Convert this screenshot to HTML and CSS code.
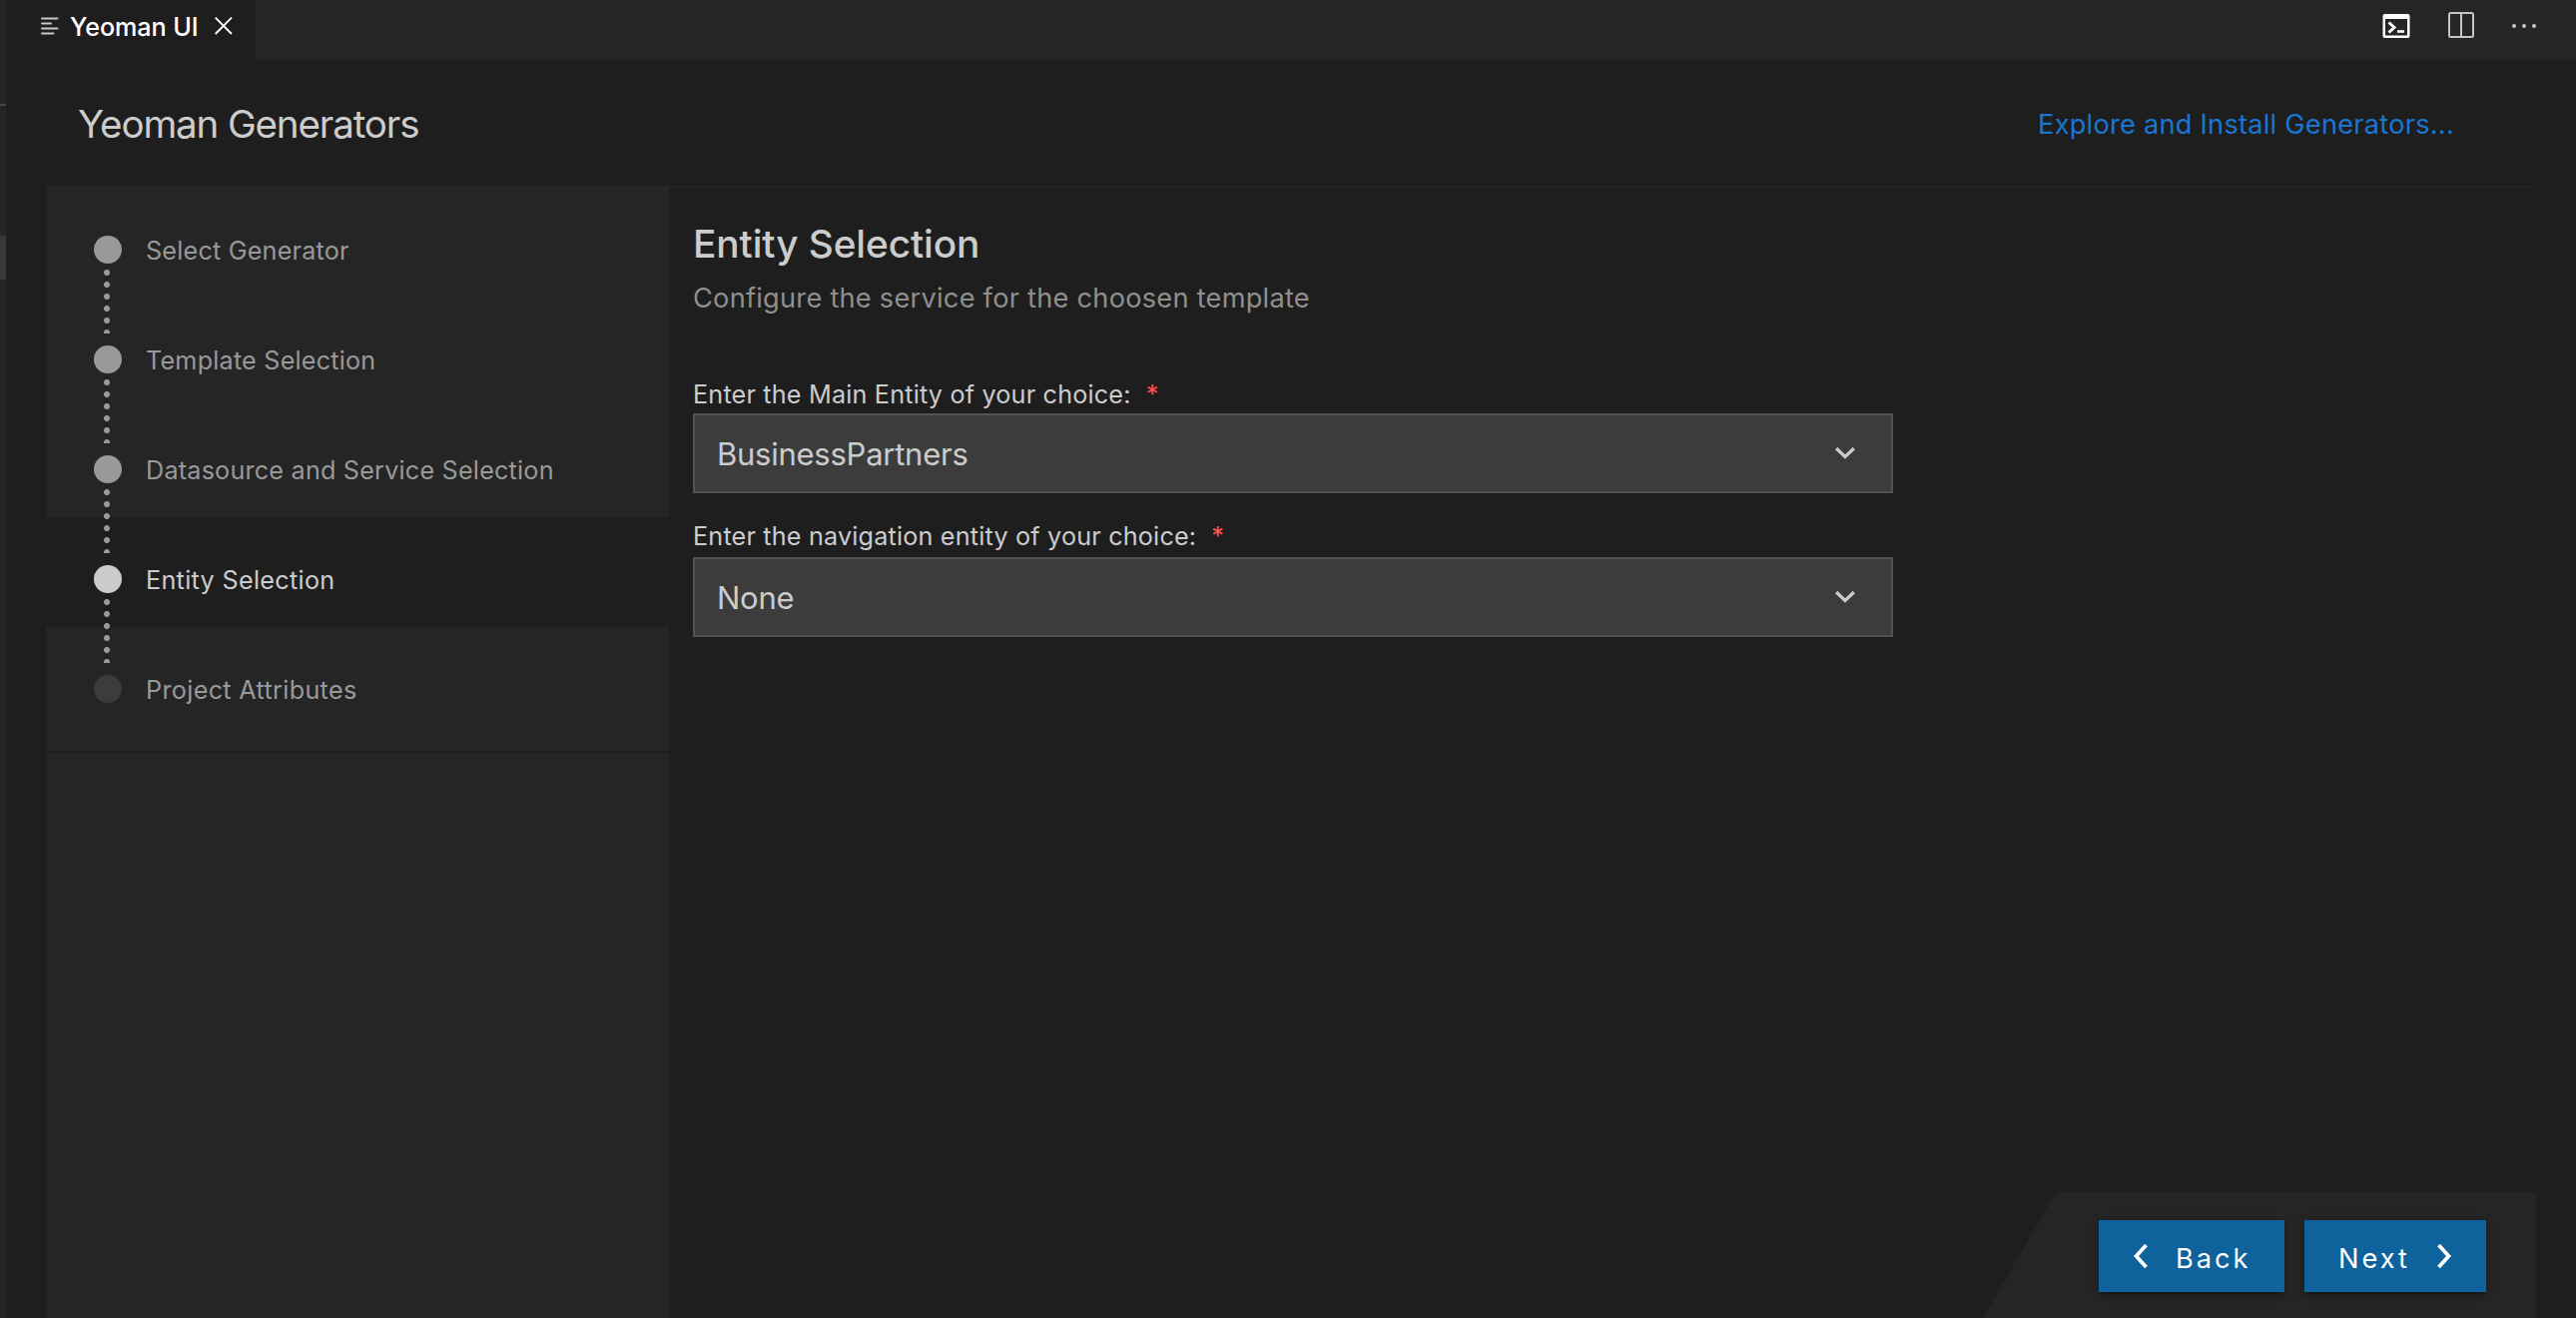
FILE: index.html
```
<!DOCTYPE html>
<html lang="en">
<head>
<meta charset="utf-8">
<title>Yeoman UI</title>
<link rel="stylesheet" href="styles.css">
</head>
<body>
<div class="window">
  <div class="gutter"><span class="gutter-line"></span><span class="gutter-selection"></span></div>
  <div class="editor">
    <div class="tabbar">
      <div class="tab">
        <svg width="18" height="18" viewBox="0 0 18 18"><path d="M1 1.500H16.500M1 6.500H10M1 11.500H16.500M1 16.500H12.500" stroke="#c8c8c8" stroke-width="2" stroke-linecap="round"/></svg>
        <span class="tab-title">Yeoman UI</span>
        <svg width="18" height="18" viewBox="0 0 18 18"><path d="M.7.7L17 17M17 .7L.7 17" stroke="#fff" stroke-width="1.900"/></svg>
      </div>
      <div class="actions">
        <svg class="terminal" width="28" height="26" viewBox="0 0 28 26"><path fill="#fff" fill-rule="evenodd" d="M2.500 1H25.500a2 2 0 0 1 2 2V23a2 2 0 0 1-2 2H2.500a2 2 0 0 1-2-2V3a2 2 0 0 1 2-2ZM3 6V22.500H25V6Z"/><path d="M6.500 9.500L12 14.500L6.500 19.500" fill="none" stroke="#fff" stroke-width="3"/><path d="M15 18.500H22" stroke="#fff" stroke-width="2.600"/></svg>
        <svg width="26" height="26" viewBox="0 0 26 26" fill="none" stroke="#c5c5c5" stroke-width="2"><rect x="1" y="1" width="24" height="24" rx="1.500"/><path d="M13 1V25"/></svg>
        <svg width="24" height="26" viewBox="0 0 24 26" fill="#c5c5c5"><circle cx="2" cy="14" r="2"/><circle cx="12" cy="14" r="2"/><circle cx="22" cy="14" r="2"/></svg>
      </div>
    </div>
    <header class="header">
      <h1 class="app-title">Yeoman Generators</h1>
      <a class="explore">Explore and Install Generators...</a>
    </header>
    <div class="content">
      <nav class="steps">
        <ol class="step-list">
          <li class="step"><span class="bullet"></span><span class="step-name">Select Generator</span></li>
          <li class="step"><span class="bullet"></span><span class="step-name">Template Selection</span></li>
          <li class="step"><span class="bullet"></span><span class="step-name">Datasource and Service Selection</span></li>
          <li class="step active"><span class="bullet"></span><span class="step-name">Entity Selection</span></li>
          <li class="step pending"><span class="bullet"></span><span class="step-name">Project Attributes</span></li>
        </ol>
      </nav>
      <main class="form">
        <h2 class="form-title">Entity Selection</h2>
        <p class="form-sub">Configure the service for the choosen template</p>
        <div class="label"><span>Enter the Main Entity of your choice:</span><span class="required">*</span></div>
        <div class="select"><span class="value">BusinessPartners</span><svg width="22" height="14" viewBox="0 0 22 14"><path d="M2.200 2L11 10.500L19.800 2" fill="none" stroke="#ccc" stroke-width="3.200"/></svg></div>
        <div class="label second"><span>Enter the navigation entity of your choice:</span><span class="required">*</span></div>
        <div class="select"><span class="value">None</span><svg width="22" height="14" viewBox="0 0 22 14"><path d="M2.200 2L11 10.500L19.800 2" fill="none" stroke="#ccc" stroke-width="3.200"/></svg></div>
        <footer class="footer">
          <button class="button back"><svg width="16" height="26" viewBox="0 0 16 26"><path d="M13.500 2L3.500 13L13.500 24" fill="none" stroke="#fff" stroke-width="3.800"/></svg><span class="caption">Back</span></button>
          <button class="button next"><span class="caption">Next</span><svg width="16" height="26" viewBox="0 0 16 26"><path d="M2.500 2L12.500 13L2.500 24" fill="none" stroke="#fff" stroke-width="3.800"/></svg></button>
        </footer>
      </main>
    </div>
  </div>
</div>
</body>
</html>
```
FILE: styles.css
```
* { box-sizing: border-box; }
body { margin: 0; background: #1e1e1e; color: #ccc; font-family: Inter, "Liberation Sans", sans-serif; white-space: nowrap; }
h1, h2, p, ol { margin: 0; padding: 0; font-weight: 400; }
svg { display: block; flex: none; }

.window { display: flex; width: 2580px; height: 1320px; overflow: hidden; }
.gutter { width: 6px; background: #252526; display: flex; flex-direction: column; }
.gutter-line { height: 2px; margin-top: 104px; background: #474747; }
.gutter-selection { height: 44px; margin-top: 130px; background: #37373d; }
.editor { flex: 1; display: flex; flex-direction: column; }

.tabbar { height: 60px; display: flex; justify-content: space-between; background: #252526; }
.tab { width: 250px; display: flex; align-items: center; padding: 0 0 8px 35px; background: #1e1e1e; color: #fff; }
.tab-title { width: 128px; margin: 0 17px 0 11px; padding-top: 2px; font-size: 25.2px; font-weight: 500; letter-spacing: -.1px; }
.actions { display: flex; gap: 38px; padding: 12px 40px 0 0; }
.terminal { margin-top: 1px; }

.header { height: 126px; margin-right: 40px; display: flex; align-items: center; justify-content: space-between; padding: 2px 82px 0 72px; }
.app-title { font-size: 38.6px; letter-spacing: -1.15px; }
.explore { font-size: 27.2px; letter-spacing: .24px; color: #1976d2; }

.content { flex: 1; display: flex; margin: 0 40px; border-top: 2px solid #252526; }
.steps { width: 624px; background: #252526; }
.step-list { list-style: none; height: 566px; border-bottom: 2px solid #1e1e1e; }
.step { position: relative; height: 110px; display: flex; align-items: center; gap: 24px; padding: 14px 0 0 48px; color: #999; font-size: 25.2px; letter-spacing: .2px; }
.step-name { padding-top: 2px; }
.bullet { width: 28px; height: 28px; border-radius: 50%; background: #999; }
.step:not(:last-child)::after { content: ""; position: absolute; z-index: 1; left: 58px; top: 82px; width: 6px; height: 64px; background: radial-gradient(circle at 3px 3px, #999 2.6px, transparent 3.4px) 0 0 / 6px 12px; }
.active { background: #1e1e1e; color: #ccc; letter-spacing: .3px; }
.active .bullet { background: #ccc; }
.pending { letter-spacing: .32px; }
.pending .bullet { background: #3c3c3c; }

.form { flex: 1; display: flex; flex-direction: column; padding: 26px 0 0 24px; }
.form-title { font-size: 38.8px; font-weight: 500; line-height: 60px; letter-spacing: -.1px; }
.form-sub { margin: 3px 0 53px; font-size: 27.2px; line-height: 44px; letter-spacing: .25px; color: #8f8f8f; }
.label { height: 40px; line-height: 40px; padding-top: 1px; font-size: 25.2px; letter-spacing: .18px; }
.label.second { height: 42px; margin-top: 22px; }
.required { color: #ff5252; margin-left: 15px; }
.select { width: 1202px; height: 80px; display: flex; align-items: center; justify-content: space-between; background: #3c3c3c; border: 2px solid #525252; padding: 0 35px 0 22px; }
.value { padding-top: 1px; font-size: 31px; letter-spacing: -.25px; }

.footer { width: 554px; height: 126px; margin-top: auto; align-self: flex-end; display: flex; gap: 20px; padding: 28px 50px 0 116px; background: #252526; clip-path: polygon(73px 0, 100% 0, 100% 100%, 0 100%); }
.button { height: 72px; display: flex; align-items: center; gap: 27px; border: 0; padding: 0; background: #0e639c; color: #fff; font-family: inherit; font-size: 27.2px; letter-spacing: 3px; box-shadow: 0 6px 2px -4px rgba(0,0,0,.2), 0 4px 4px rgba(0,0,0,.14), 0 2px 10px rgba(0,0,0,.12); }
.back { width: 186px; padding-left: 34px; }
.next { width: 182px; padding-left: 34px; gap: 26px; }
.caption { padding-top: 4px; font-weight: 400; }
```
